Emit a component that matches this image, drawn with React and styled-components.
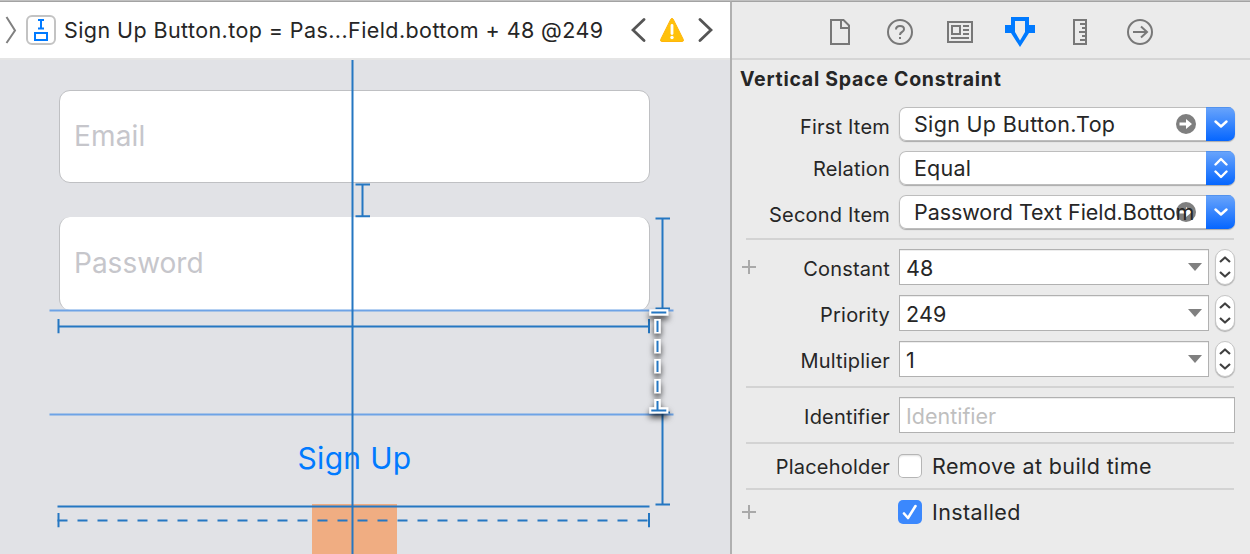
import React from "react";
import styled, { createGlobalStyle } from "styled-components";

const Global = createGlobalStyle`
  *, *::before, *::after { box-sizing: border-box; }
  body { margin: 0; background: #ebebeb; }
  svg { display: block; }
`;

const Window = styled.main`
  display: grid;
  grid-template-columns: 730px 520px;
  width: 1250px;
  height: 554px;
  overflow: hidden;
  border-top: 1px solid #c0c0c0;
  font-family: Inter, "Liberation Sans", sans-serif;
  color: #262626;
  white-space: nowrap;
`;

const Editor = styled.section`
  display: flex;
  flex-direction: column;
  border-top: 1px solid #a3a3a3;
  min-width: 0;
`;

const JumpBar = styled.header`
  display: flex;
  align-items: center;
  height: 58px;
  flex: none;
  padding-left: 5px;
  background: #fff;
  border-bottom: 2px solid #e5e5e5;
`;

const ConstraintBadge = styled.span`
  display: grid;
  place-items: center;
  width: 30px;
  height: 30px;
  margin: 0 8px 0 9px;
  border: 2px solid #c3c3c3;
  border-radius: 6px;
`;

const Crumb = styled.span`
  width: 567px;
  font-size: 21.5px;
  line-height: 30px;
  letter-spacing: ${(p) => p.$tracking}px;
`;

const Issues = styled.nav`
  display: flex;
  align-items: center;
  gap: 13px;
`;

const Canvas = styled.div`
  position: relative;
  flex: 1;
  display: flex;
  flex-direction: column;
  padding: 30px 80px 0 59px;
  background: #e1e2e6;
`;

const TextField = styled.div`
  display: flex;
  align-items: center;
  height: 93px;
  flex: none;
  margin-bottom: ${(p) => p.$gap}px;
  padding: 0 0 1px 14px;
  background: #fff;
  border: 1px solid #bfc0c3;
  border-width: ${(p) => (p.$soft ? "0 1px" : "1px")};
  border-radius: 11px;
  font-size: 28px;
  letter-spacing: ${(p) => p.$tracking}px;
  color: #c6c6cb;
`;

const SignUp = styled.div`
  width: 591px;
  height: 90px;
  flex: none;
  line-height: 89px;
  text-align: center;
  font-size: 30px;
  letter-spacing: ${(p) => p.$tracking}px;
  color: #007aff;
`;

const Misplaced = styled.div`
  width: 85px;
  flex: 1;
  margin-left: 253px;
  background: #f0ad82;
`;

const Guides = styled.svg`
  position: absolute;
  inset: 0;
`;

const Inspector = styled.aside`
  display: flex;
  flex-direction: column;
  border-top: 1px solid #a3a3a3;
  border-left: 2px solid #b0b0b0;
  background: #ebebeb;
`;

const Tabs = styled.nav`
  display: flex;
  justify-content: center;
  height: 58px;
  padding-right: 2px;
  border-bottom: 2px solid #d5d5d5;
`;

const Tab = styled.span`
  display: grid;
  place-items: center;
  width: 60px;
  height: 60px;
`;

const Title = styled.h1`
  margin: 0;
  height: 42px;
  padding-left: 8px;
  font-size: 19.5px;
  line-height: 38px;
  font-weight: 700;
  letter-spacing: ${(p) => p.$tracking}px;
`;

const Group = styled.div`
  padding: ${(p) => p.$pad || "0"};
`;

const Divider = styled.hr`
  flex: none;
  width: 488px;
  height: 2px;
  margin: 0 0 0 14px;
  border: 0;
  background: #d3d3d3;
`;

const Row = styled.div`
  display: grid;
  grid-template-columns: 14px 134px 1fr;
  align-items: center;
  height: ${(p) => p.$h}px;
  padding: 0 15px 0 10px;
`;

const Label = styled.label`
  padding-top: ${(p) => p.$drop * 2}px;
  text-align: right;
  font-size: 20px;
  line-height: 24px;
  letter-spacing: 0.2px;
`;

const Controls = styled.div`
  display: flex;
  align-items: center;
  padding-left: ${(p) => p.$inset || 9}px;
`;

const Popup = styled.div`
  display: flex;
  width: 336px;
  height: 34px;
  border-radius: 7px;
  background: #fff;
  box-shadow: inset 0 0 0 1px #bdbdbd, 0 1px 1px rgba(0, 0, 0, 0.28);
  overflow: hidden;
`;

const PopupValue = styled.span`
  position: relative;
  z-index: 1;
  width: 276px;
  padding-left: 15px;
  font-size: 21.5px;
  line-height: 34px;
  letter-spacing: ${(p) => p.$tracking}px;
`;

const Jump = styled.span`
  display: grid;
  place-items: center;
  width: 31px;
  padding-right: 9px;
`;

const PopupButton = styled.span`
  display: grid;
  place-items: center;
  width: 29px;
  background: linear-gradient(#6aa5fb, #0566ff);
  box-shadow: inset 0 1px 0 #5292ee;
`;

const Input = styled.div`
  display: flex;
  align-items: center;
  justify-content: space-between;
  width: ${(p) => p.$w}px;
  height: 36px;
  padding: 0 6px;
  background: #fff;
  border: 1px solid #b1b1b1;
  box-shadow: inset 0 1px 0 #ededed;
  font-size: 21.5px;
  letter-spacing: ${(p) => p.$tracking || 0}px;
  color: ${(p) => (p.$empty ? "#bfbfbf" : "#262626")};
`;

const InputText = styled.span`
  padding-top: 2px;
`;

const Stepper = styled.span`
  display: grid;
  place-items: center;
  width: 20px;
  height: 36px;
  margin-left: 6px;
  border: 1px solid #c6c6c6;
  border-radius: 10px;
  background: #fff;
  box-shadow: 0 1px 1px rgba(0, 0, 0, 0.25);
`;

const Check = styled.span`
  display: grid;
  place-items: center;
  width: 24px;
  height: 24px;
  margin-right: 10px;
  border-radius: 5px;
  background: ${(p) => (p.$on ? "#3b88fd" : "#fff")};
  box-shadow: ${(p) =>
    p.$on ? "none" : "inset 0 0 0 1px #b5b5b5, inset 0 2px 2px rgba(0,0,0,.13)"};
`;

const CheckText = styled.span`
  font-size: 21.5px;
  letter-spacing: ${(p) => p.$tracking}px;
`;

const Plus = () => (
  <svg width="14" height="14" fill="none" stroke="#a9a9a9" strokeWidth="2">
    <path d="M0 7H14M7 0V14" />
  </svg>
);

const JumpArrow = () => (
  <svg width="20" height="20">
    <circle cx="10" cy="10" r="10" fill="#7f7f7f" />
    <path d="M3.500 8.500H10V5l6 5-6 5v-3.500H3.500z" fill="#fff" />
  </svg>
);

const Chevron = () => (
  <svg width="14" height="8" fill="none" stroke="#fff" strokeWidth="2.4" strokeLinecap="round" strokeLinejoin="round">
    <path d="M1.500 1.500 7 6.500l5.500-5" />
  </svg>
);

const UpDown = () => (
  <svg width="14" height="22" fill="none" stroke="#fff" strokeWidth="2.4" strokeLinecap="round" strokeLinejoin="round">
    <path d="M1.500 7.500 7 2l5.500 5.500M1.500 14.500 7 20l5.500-5.500" />
  </svg>
);

const PopupRow = ({ label, value, drop = 0, jump, vt }) => (
  <Row $h={44}>
    <span />
    <Label $drop={drop}>{label}</Label>
    <Controls>
      <Popup>
        <PopupValue $tracking={vt}>{value}</PopupValue>
        <Jump>{jump && <JumpArrow />}</Jump>
        <PopupButton>{jump ? <Chevron /> : <UpDown />}</PopupButton>
      </Popup>
    </Controls>
  </Row>
);

const NumberRow = ({ label, value, plus }) => (
  <Row $h={46}>
    <span>{plus && <Plus />}</span>
    <Label $drop={1.5}>{label}</Label>
    <Controls>
      <Input $w={310} $tracking={0.2}>
        <InputText>{value}</InputText>
        <svg width="14" height="8"><path d="M0 0H14L7 8z" fill="#808080" /></svg>
      </Input>
      <Stepper>
        <svg width="12" height="24" fill="none" stroke="#404040" strokeWidth="2.2" strokeLinejoin="round">
          <path d="M1 7 6 2.500 11 7M1 17l5 4.500 5-4.500" />
        </svg>
      </Stepper>
    </Controls>
  </Row>
);

const ConstraintGuides = () => (
  <Guides width="730" height="494" viewBox="0 60 730 494" fill="none" stroke="#2577c2" strokeWidth="2">
    <defs>
      <filter id="lift" x="630" y="290" width="60" height="150" filterUnits="userSpaceOnUse">
        <feDropShadow dx="0" dy="4" stdDeviation="3" floodColor="#000" floodOpacity="0.75" />
      </filter>
    </defs>
    <path d="M49.500 310.400H673.500M49.500 414.400H673.500" stroke="#6ea3e6" />
    <path d="M58.500 319V333.300M58.500 326.400H649M649 319V333.300" />
    <path d="M57.500 506.400H649.500" />
    <path d="M58.500 513V527.300M649 513V527.300" />
    <path d="M57.500 520.400H649" strokeDasharray="10 10" />
    <path d="M352.500 60V554" />
    <path d="M355.500 184.400H370M362.500 184V216M355.500 216.200H370" />
    <path d="M655.500 218.400H670M662.500 218V308M655.500 308.400H670" />
    <path d="M655.500 412.400H670M662.500 412V504M655.500 504.400H670" />
    <g filter="url(#lift)">
      <path
        d="M649.300 312.400H668.300M657.500 319V333.300M657.500 339V353.300M657.500 359V373.300M657.500 379V393.300M657.500 399V411M649.300 410.400H668.300"
        stroke="#fff"
        strokeWidth="6.400"
      />
    </g>
    <path d="M651.300 312.400H666.300M657.500 320.700V332M657.500 340.700V352M657.500 360.700V372M657.500 380.700V392M657.500 401V411M651.300 410.400H666.300" />
  </Guides>
);

export default function App() {
  return (
    <Window>
      <Global />
      <Editor>
        <JumpBar>
          <svg width="12" height="28" fill="none" stroke="#808080" strokeWidth="2">
            <path d="M1.500 1 10 14.500 1.500 27" />
          </svg>
          <ConstraintBadge>
            <svg width="16" height="24" fill="none" stroke="#007aff" strokeWidth="2">
              <path d="M5 2H11M8 2V11M5 10.500H11M2 15H14V22H2z" />
            </svg>
          </ConstraintBadge>
          <Crumb $tracking={0.41}>Sign Up Button.top = Pas...Field.bottom + 48 @249</Crumb>
          <Issues>
            <svg width="15" height="26" fill="none" stroke="#555" strokeWidth="2.800" strokeLinecap="round">
              <path d="M13 2.500 2 13 13 23.500" />
            </svg>
            <svg width="26" height="26">
              <path d="M11.800 2.200Q13 0.500 14.200 2.200L24.300 22.500Q25 24.500 23 24.500H3Q1 24.500 1.700 22.500z" fill="#ffc10a" stroke="#ffb50a" strokeLinejoin="round" />
              <path d="M13 8.500V16.500" stroke="#fff" strokeWidth="2.800" strokeLinecap="round" />
              <circle cx="13" cy="20.500" r="1.700" fill="#fff" />
            </svg>
            <svg width="15" height="26" fill="none" stroke="#555" strokeWidth="2.800" strokeLinecap="round">
              <path d="M2 2.500 13 13 2 23.500" />
            </svg>
          </Issues>
        </JumpBar>
        <Canvas>
          <TextField $gap={34} $tracking={0.15}>Email</TextField>
          <TextField $gap={104} $tracking={0} $soft>Password</TextField>
          <SignUp $tracking={0.3}>Sign Up</SignUp>
          <Misplaced />
          <ConstraintGuides />
        </Canvas>
      </Editor>
      <Inspector>
        <Tabs>
          <Tab>
            <svg width="20" height="26" fill="none" stroke="#787878" strokeWidth="2">
              <path d="M1 1H13.500L19 6.500V25H1zM11 1V9H19" />
            </svg>
          </Tab>
          <Tab>
            <svg width="26" height="26" fill="none" stroke="#787878" strokeWidth="2">
              <circle cx="13" cy="13" r="12" />
              <path d="M9 10.500Q9 7 13 7T17 10.200Q17 12 15 13T13 16" />
              <path d="M13 18V20" />
            </svg>
          </Tab>
          <Tab>
            <svg width="26" height="22" fill="none" stroke="#787878" strokeWidth="2">
              <path d="M1 1H25V21H1zM5 5H13V13H5zM16 5H22M16 9H22M16 13H22M4 17H22" />
            </svg>
          </Tab>
          <Tab>
            <svg width="30" height="30">
              <path fillRule="evenodd" d="M6 0H24V8H30V16H24L15 30 6 16H0V8H6zM10 4V15L15 23.500 20 15V4z" fill="#007aff" />
            </svg>
          </Tab>
          <Tab>
            <svg width="14" height="26" fill="none" stroke="#787878" strokeWidth="2">
              <path d="M1 1H13V25H1zM7 5H13M9 9H13M6 13H13M9 17H13M7 21H13" />
            </svg>
          </Tab>
          <Tab>
            <svg width="26" height="26" fill="none" stroke="#787878" strokeWidth="2">
              <circle cx="13" cy="13" r="12" />
              <path d="M6 13H20M14 7.500 20 13 14 18.500" />
            </svg>
          </Tab>
        </Tabs>
        <Title $tracking={0.74}>Vertical Space Constraint</Title>
        <Group $pad="0 0 4px">
          <PopupRow label="First Item" value="Sign Up Button.Top" drop={3} jump vt={0.32} />
          <PopupRow label="Relation" value="Equal" drop={1} vt={0.2} />
          <PopupRow label="Second Item" value="Password Text Field.Bottom" drop={3} jump vt={-0.07} />
        </Group>
        <Divider />
        <Group $pad="4px 0">
          <NumberRow label="Constant" value="48" plus />
          <NumberRow label="Priority" value="249" />
          <NumberRow label="Multiplier" value="1" />
        </Group>
        <Divider />
        <Row $h={54}>
          <span />
          <Label $drop={1.5}>Identifier</Label>
          <Controls>
            <Input $w={336} $empty><InputText>Identifier</InputText></Input>
          </Controls>
        </Row>
        <Divider />
        <Row $h={44}>
          <span />
          <Label $drop={0.5}>Placeholder</Label>
          <Controls $inset={8}>
            <Check />
            <CheckText $tracking={0.4}>Remove at build time</CheckText>
          </Controls>
        </Row>
        <Divider />
        <Row $h={44}>
          <Plus />
          <span />
          <Controls $inset={8}>
            <Check $on>
              <svg width="16" height="18" fill="none" stroke="#fff" strokeWidth="2.600" strokeLinecap="round" strokeLinejoin="round">
                <path d="M2 10.500 6 15 13.500 3" />
              </svg>
            </Check>
            <CheckText $tracking={0.4}>Installed</CheckText>
          </Controls>
        </Row>
      </Inspector>
    </Window>
  );
}
